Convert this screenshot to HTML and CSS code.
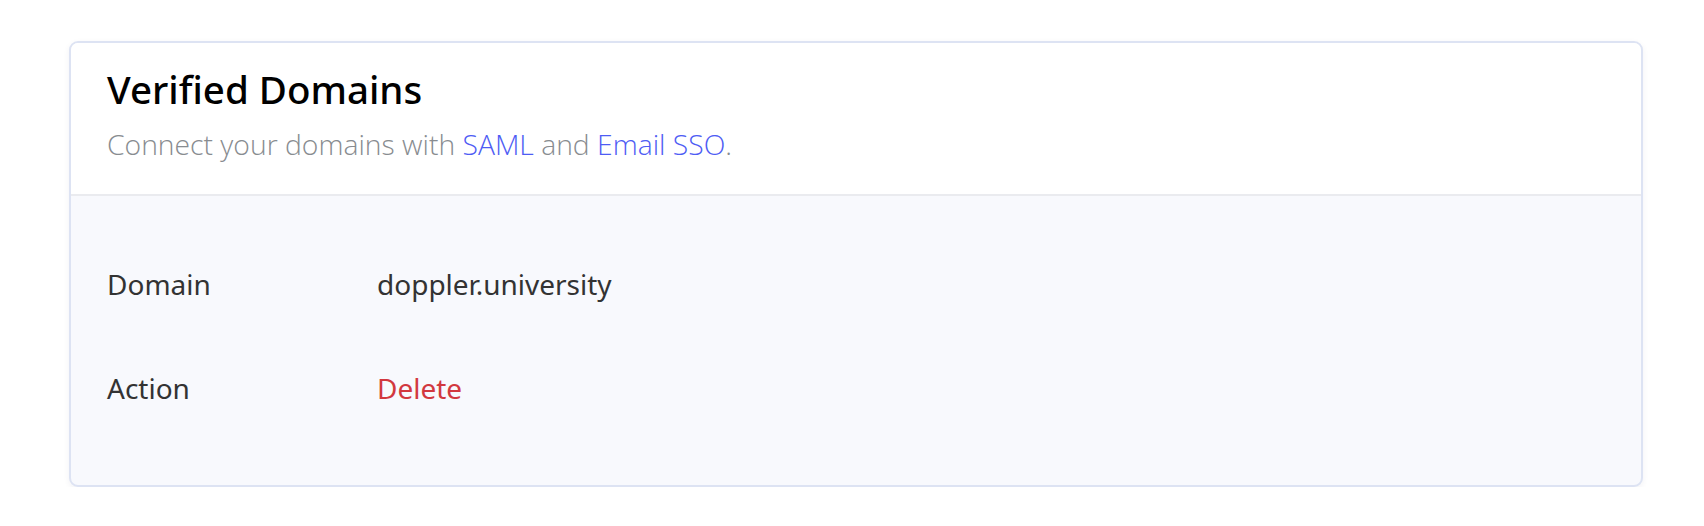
FILE: index.html
```html
<!DOCTYPE html>
<html lang="en">
<head>
<meta charset="utf-8">
<title>Verified Domains</title>
<link rel="stylesheet" href="styles.css">
</head>
<body>
<main class="page">
  <section class="card">
    <header class="card-header">
      <h1 class="card-title">Verified Domains</h1>
      <p class="card-subtitle">Connect your domains with <a class="link" href="#">SAML</a> and <a class="link" href="#">Email SSO</a>.</p>
    </header>
    <div class="card-body">
      <dl class="details">
        <dt class="label">Domain</dt>
        <dd class="value">doppler.university</dd>
        <dt class="label">Action</dt>
        <dd class="value"><a class="danger" href="#">Delete</a></dd>
      </dl>
    </div>
  </section>
</main>
</body>
</html>
```

FILE: styles.css
```css
* { box-sizing: border-box; }
html, body { margin: 0; padding: 0; background: #ffffff; }
body {
  font-family: "Noto Sans", "Open Sans", "DejaVu Sans", sans-serif;
  color: #333333;
}
.page {
  padding: 41px 61px 0 69px;
}
.card {
  border: 2px solid #dde3f3;
  border-radius: 9px;
  overflow: hidden;
  background: #f8f9fd;
  box-shadow: 0 2px 6px rgba(30, 40, 80, 0.06);
  height: 446px;
}
.card-header {
  background: #ffffff;
  border-bottom: 2px solid #eaebef;
  padding: 24px 36px 0;
  height: 153px;
}
.card-title {
  margin: 0;
  font-size: 38.5px;
  line-height: 44px;
  font-weight: 500;
  color: #000000;
}
.card-subtitle {
  margin: 14px 0 0;
  font-family: "Open Sans", "Noto Sans", sans-serif;
  font-size: 28.3px;
  line-height: 38px;
  font-weight: 300;
  color: #888c90;
}
.link {
  color: #4e5cf4;
  text-decoration: none;
}
.card-body {
  padding: 70px 36px 0;
}
.details {
  margin: 0;
  display: grid;
  grid-template-columns: 270px 1fr;
  row-gap: 68px;
  font-size: 28px;
  line-height: 36px;
}
.label { margin: 0; color: #333333; }
.value { margin: 0; color: #333333; }
.danger {
  color: #d2383f;
  text-decoration: none;
}
```
